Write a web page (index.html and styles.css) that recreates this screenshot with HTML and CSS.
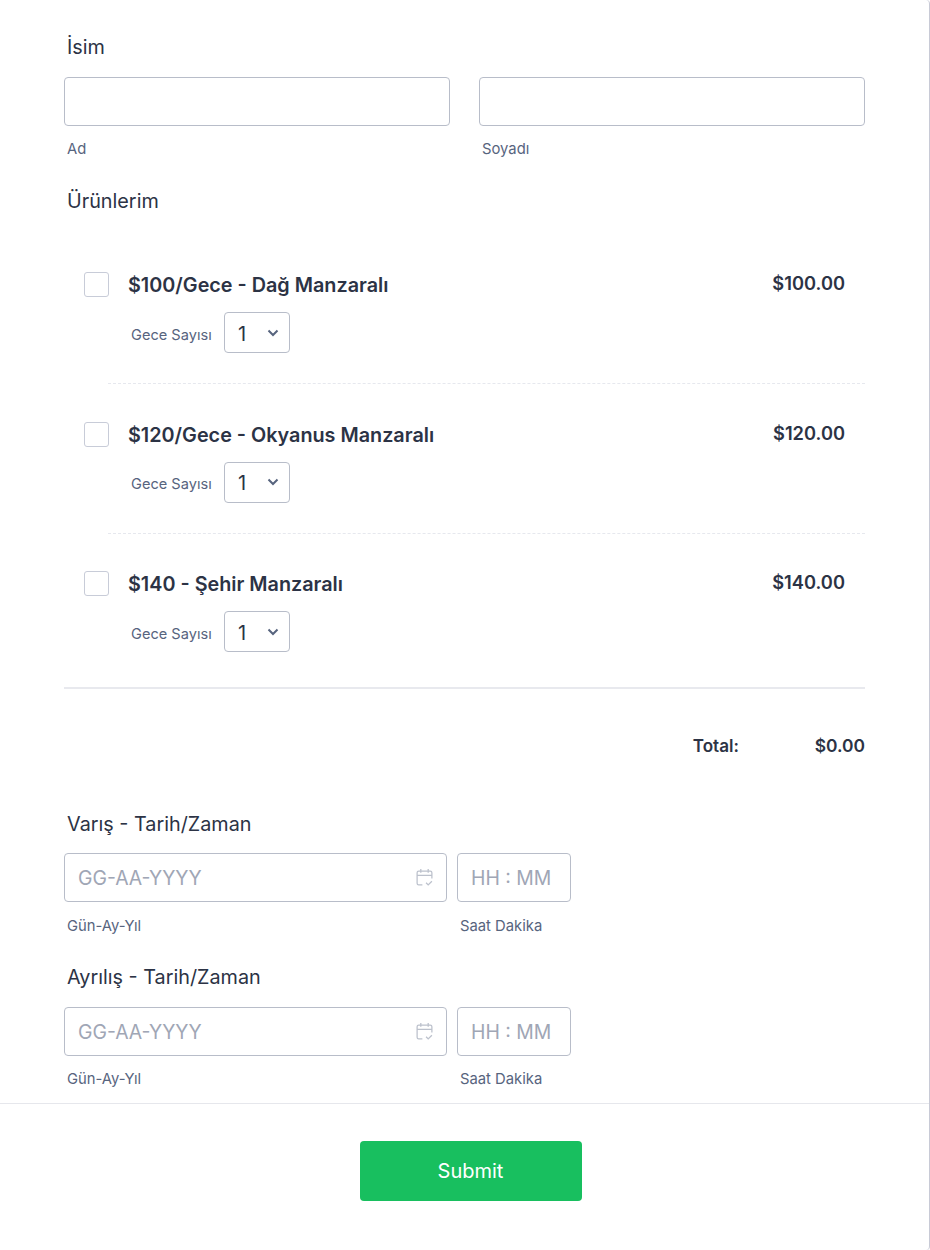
FILE: index.html
```html
<!DOCTYPE html>
<html lang="tr">
<head>
<meta charset="utf-8">
<title>Form</title>
<link rel="stylesheet" href="styles.css">
</head>
<body>
<main class="card">
  <form class="form">
    <section class="field name-field">
      <div class="label">İsim</div>
      <div class="name-row">
        <div class="name-col"><div class="input name-input"></div><div class="sub">Ad</div></div>
        <div class="name-col"><div class="input name-input"></div><div class="sub">Soyadı</div></div>
      </div>
    </section>
    <section class="products">
      <div class="label">Ürünlerim</div>
      <div class="list">
        <div class="item">
          <span class="check"></span>
          <div class="item-body">
            <div class="item-top"><span class="item-name">$100/Gece - Dağ Manzaralı</span><span class="price">$100.00</span></div>
            <div class="qty"><span class="qty-label">Gece Sayısı</span><span class="select"><span class="select-value">1</span><svg class="chev" viewBox="0 0 12 8"><path d="M1.5 1.5 6 6l4.500-4.500"/></svg></span></div>
          </div>
        </div>
        <div class="item">
          <span class="check"></span>
          <div class="item-body">
            <div class="item-top"><span class="item-name">$120/Gece - Okyanus Manzaralı</span><span class="price">$120.00</span></div>
            <div class="qty"><span class="qty-label">Gece Sayısı</span><span class="select"><span class="select-value">1</span><svg class="chev" viewBox="0 0 12 8"><path d="M1.5 1.5 6 6l4.500-4.500"/></svg></span></div>
          </div>
        </div>
        <div class="item">
          <span class="check"></span>
          <div class="item-body">
            <div class="item-top"><span class="item-name">$140 - Şehir Manzaralı</span><span class="price">$140.00</span></div>
            <div class="qty"><span class="qty-label">Gece Sayısı</span><span class="select"><span class="select-value">1</span><svg class="chev" viewBox="0 0 12 8"><path d="M1.5 1.5 6 6l4.500-4.500"/></svg></span></div>
          </div>
        </div>
      </div>
      <div class="total"><span class="total-label">Total:</span><span class="total-value">$0.00</span></div>
    </section>
    <section class="field date-field first-date">
      <div class="label">Varış - Tarih/Zaman</div>
      <div class="date-row">
        <div class="date-col"><div class="input date-input"><span class="ph">GG-AA-YYYY</span><svg class="cal" viewBox="0 0 18 18"><path d="M7 16H3.500A1.500 1.500 0 0 1 2 14.500V4.500A1.500 1.500 0 0 1 3.500 3h11A1.500 1.500 0 0 1 16 4.500V10M2 7h14M5.500 1v3.500M12.500 1v3.500M10.500 14l2 2 3.500-3.500"/></svg></div><div class="sub">Gün-Ay-Yıl</div></div>
        <div class="time-col"><div class="input time-input"><span class="ph">HH : MM</span></div><div class="sub">Saat Dakika</div></div>
      </div>
    </section>
    <section class="field date-field second-date">
      <div class="label">Ayrılış - Tarih/Zaman</div>
      <div class="date-row">
        <div class="date-col"><div class="input date-input"><span class="ph">GG-AA-YYYY</span><svg class="cal" viewBox="0 0 18 18"><path d="M7 16H3.500A1.500 1.500 0 0 1 2 14.500V4.500A1.500 1.500 0 0 1 3.500 3h11A1.500 1.500 0 0 1 16 4.500V10M2 7h14M5.500 1v3.500M12.500 1v3.500M10.500 14l2 2 3.500-3.500"/></svg></div><div class="sub">Gün-Ay-Yıl</div></div>
        <div class="time-col"><div class="input time-input"><span class="ph">HH : MM</span></div><div class="sub">Saat Dakika</div></div>
      </div>
    </section>
  </form>
  <footer class="footer"><button class="submit" type="button">Submit</button></footer>
</main>
</body>
</html>
```
FILE: styles.css
```css
* { box-sizing: border-box; }
html, body { margin: 0; padding: 0; background: #fff; }
body { font-family: Inter, "Noto Sans", sans-serif; color: #2c3345; }
.card { width: 930px; height: 1250px; border-right: 1px solid #c8cad6; border-radius: 4px; overflow: hidden; display: flex; flex-direction: column; }
.form { height: 1104px; padding: 36px 64px 0 64px; border-bottom: 1px solid #e6e7ec; }
.label { font-size: 19.800px; line-height: 22px; padding-left: 3px; color: #2c3345; }
.name-row { display: flex; gap: 29px; margin-top: 19px; width: 801px; }
.name-col { flex: 1; }
.input { border: 1px solid #b8bdc9; border-radius: 4px; background: #fff; height: 49px; display: flex; align-items: center; }
.sub { font-size: 14.800px; line-height: 18px; color: #57647e; padding-left: 3px; margin-top: 14px; }
.products { margin-top: 32px; width: 801px; }
.list { margin-top: 44px; border-bottom: 2px solid #e8e9ee; height: 433px; }
.item { display: flex; padding-left: 20px; height: 149.500px; }
.check { width: 25px; height: 25px; flex: none; border: 1px solid #c8ccd8; border-radius: 3px; margin-top: 16px; background: #fff; }
.item-body { margin-left: 19px; flex: 1; padding-right: 20px; padding-top: 15px; position: relative; }
.item-body::after { content: ""; position: absolute; left: -20px; right: 0; bottom: 21.200px; border-bottom: 1px dashed #e6e8ee; }
.item:last-child .item-body::after { display: none; }
.item-top { display: flex; justify-content: space-between; align-items: flex-start; }
.item-name { font-size: 19.800px; line-height: 28px; font-weight: 600; color: #2c3345; }
.price { font-size: 18.300px; line-height: 24px; font-weight: 600; color: #2c3345; }
.qty { display: flex; align-items: center; margin-top: 13px; padding-left: 3px; }
.qty-label { font-size: 14.600px; color: #57647e; width: 93px; padding-top: 4px; }
.select { width: 66px; height: 41px; border: 1px solid #b8bdc9; border-radius: 4px; display: flex; align-items: center; justify-content: space-between; padding: 0 10px 0 13px; font-size: 20px; color: #2c3345; }
.select-value { padding-top: 2px; }
.chev { width: 12px; height: 8px; fill: none; stroke: #57647e; stroke-width: 2; }
.total { display: flex; justify-content: flex-end; align-items: center; margin-top: 44px; height: 24px; font-size: 17.100px; font-weight: 600; }
.total-label { width: 122px; }
.total-value { font-weight: 600; font-size: 17.400px; }
.first-date { margin-top: 56px; }
.second-date { margin-top: 31px; }
.date-row { display: flex; gap: 10px; margin-top: 18px; }
.second-date .date-row { margin-top: 19px; }
.date-row .sub { margin-top: 15px; }
.second-date .date-row .sub { margin-top: 14px; }
.date-col { width: 383px; }
.time-col { width: 114px; }
.date-input { padding: 0 13px; justify-content: space-between; }
.time-input { padding-left: 13px; }
.ph { font-size: 19.400px; color: #a0a6b5; }
.cal { width: 19px; height: 19px; margin-right: -1px; fill: none; stroke: #bcc1cc; stroke-width: 1.200; }
.footer { flex: 1; display: flex; justify-content: center; padding-top: 37px; padding-left: 12px; }
.submit { width: 222px; height: 60px; border: 0; border-radius: 4px; background: #18bf5f; color: #fff; font-family: inherit; font-size: 20px; font-weight: 400; }
```
